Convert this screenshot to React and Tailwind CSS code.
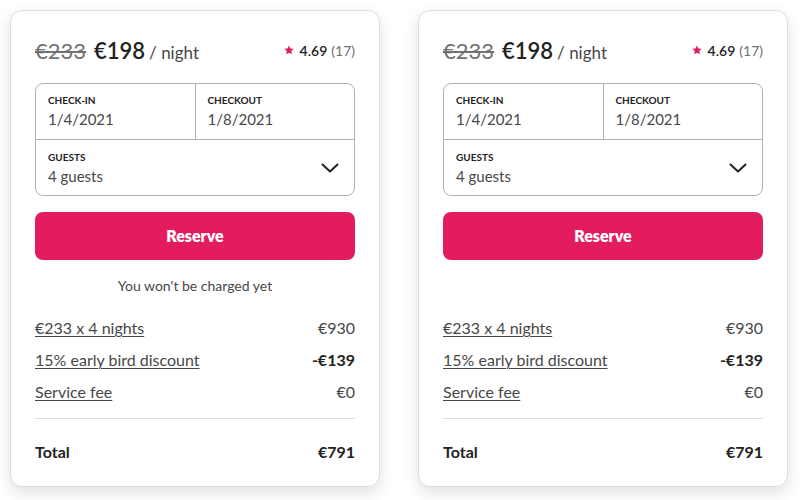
const lines = [
    { label: "€233 x 4 nights", value: "€930", bold: false },
    { label: "15% early bird discount", value: "-€139", bold: true },
    { label: "Service fee", value: "€0", bold: false },
];

function Star() {
    return (
        <svg width="10" height="10" viewBox="0 0 32 32" className="fill-[#e31c5f]">
            <path d="M16 1.5l4.4 9.6 10.5 1.2-7.8 7.1 2.2 10.3L16 24.4l-9.3 5.3 2.2-10.3-7.8-7.1 10.5-1.2z" />
        </svg>
    );
}

function Chevron() {
    return (
        <svg width="18" height="10" viewBox="0 0 18 10" fill="none" stroke="#222" strokeWidth="2" strokeLinecap="round" strokeLinejoin="round">
            <path d="M1.5 1.5L9 8.5l7.5-7" />
        </svg>
    );
}

function BookingCard({ showNote }) {
    return (
        <div className="w-[370px] h-[477px] rounded-xl border border-[#dddddd] bg-white shadow-[0_6px_16px_rgba(0,0,0,0.12)] px-6 pt-6">
            <div className="flex items-center justify-between h-[30px]">
                <div className="flex items-baseline">
                    <span className="text-[22px] text-[#717171] line-through decoration-[2px] mr-2">€233</span>
                    <span className="text-[22px] font-semibold text-[#222222]">€198</span>
                    <span className="text-[17px] text-[#484848] ml-1">/ night</span>
                </div>
                <div className="flex items-center gap-1 text-[14px]">
                    <Star />
                    <span className="text-[#222222] font-semibold ml-[2px]">4.69</span>
                    <span className="text-[#717171]">(17)</span>
                </div>
            </div>

            <div className="mt-[18px] rounded-lg border border-[#b0b0b0]">
                <div className="flex border-b border-[#b0b0b0] h-[56px]">
                    <div className="flex-1 border-r border-[#b0b0b0] pl-3 pt-[10px]">
                        <div className="text-[10px] font-bold text-[#222222] leading-3 uppercase">Check-in</div>
                        <div className="text-[15px] text-[#484848] leading-5 mt-[3px]">1/4/2021</div>
                    </div>
                    <div className="flex-1 pl-3 pt-[10px]">
                        <div className="text-[10px] font-bold text-[#222222] leading-3 uppercase">Checkout</div>
                        <div className="text-[15px] text-[#484848] leading-5 mt-[3px]">1/8/2021</div>
                    </div>
                </div>
                <div className="flex items-center justify-between h-[55px] pl-3 pr-[15px]">
                    <div className="pt-[1px]">
                        <div className="text-[10px] font-bold text-[#222222] leading-3 uppercase">Guests</div>
                        <div className="text-[15px] text-[#484848] leading-5 mt-[3px]">4 guests</div>
                    </div>
                    <Chevron />
                </div>
            </div>

            <button className="mt-4 w-full h-12 rounded-lg bg-[#e31c5f] text-white text-[16px] font-extrabold">
                Reserve
            </button>

            <div className={`mt-[15px] text-center text-[14px] text-[#484848] h-5 ${showNote ? "" : "invisible"}`}>
                You won't be charged yet
            </div>

            <div className="mt-[22px] flex flex-col gap-[10px]">
                {lines.map((l) => (
                    <div key={l.label} className="flex justify-between text-[16px] text-[#484848] leading-[22px]">
                        <span className="underline underline-offset-2 decoration-1">{l.label}</span>
                        <span className={l.bold ? "font-bold text-[#222222]" : ""}>{l.value}</span>
                    </div>
                ))}
            </div>

            <div className="mt-[15px] border-t border-[#dddddd]" />

            <div className="mt-[21px] flex justify-between text-[16px] font-bold text-[#222222]">
                <span>Total</span>
                <span>€791</span>
            </div>
        </div>
    );
}

export default function App() {
    return (
        <div className="w-[800px] h-[500px] bg-white flex gap-[38px] pl-[10px] pt-[10px] font-['Lato',sans-serif]">
            <BookingCard showNote />
            <BookingCard showNote={false} />
        </div>
    );
}
